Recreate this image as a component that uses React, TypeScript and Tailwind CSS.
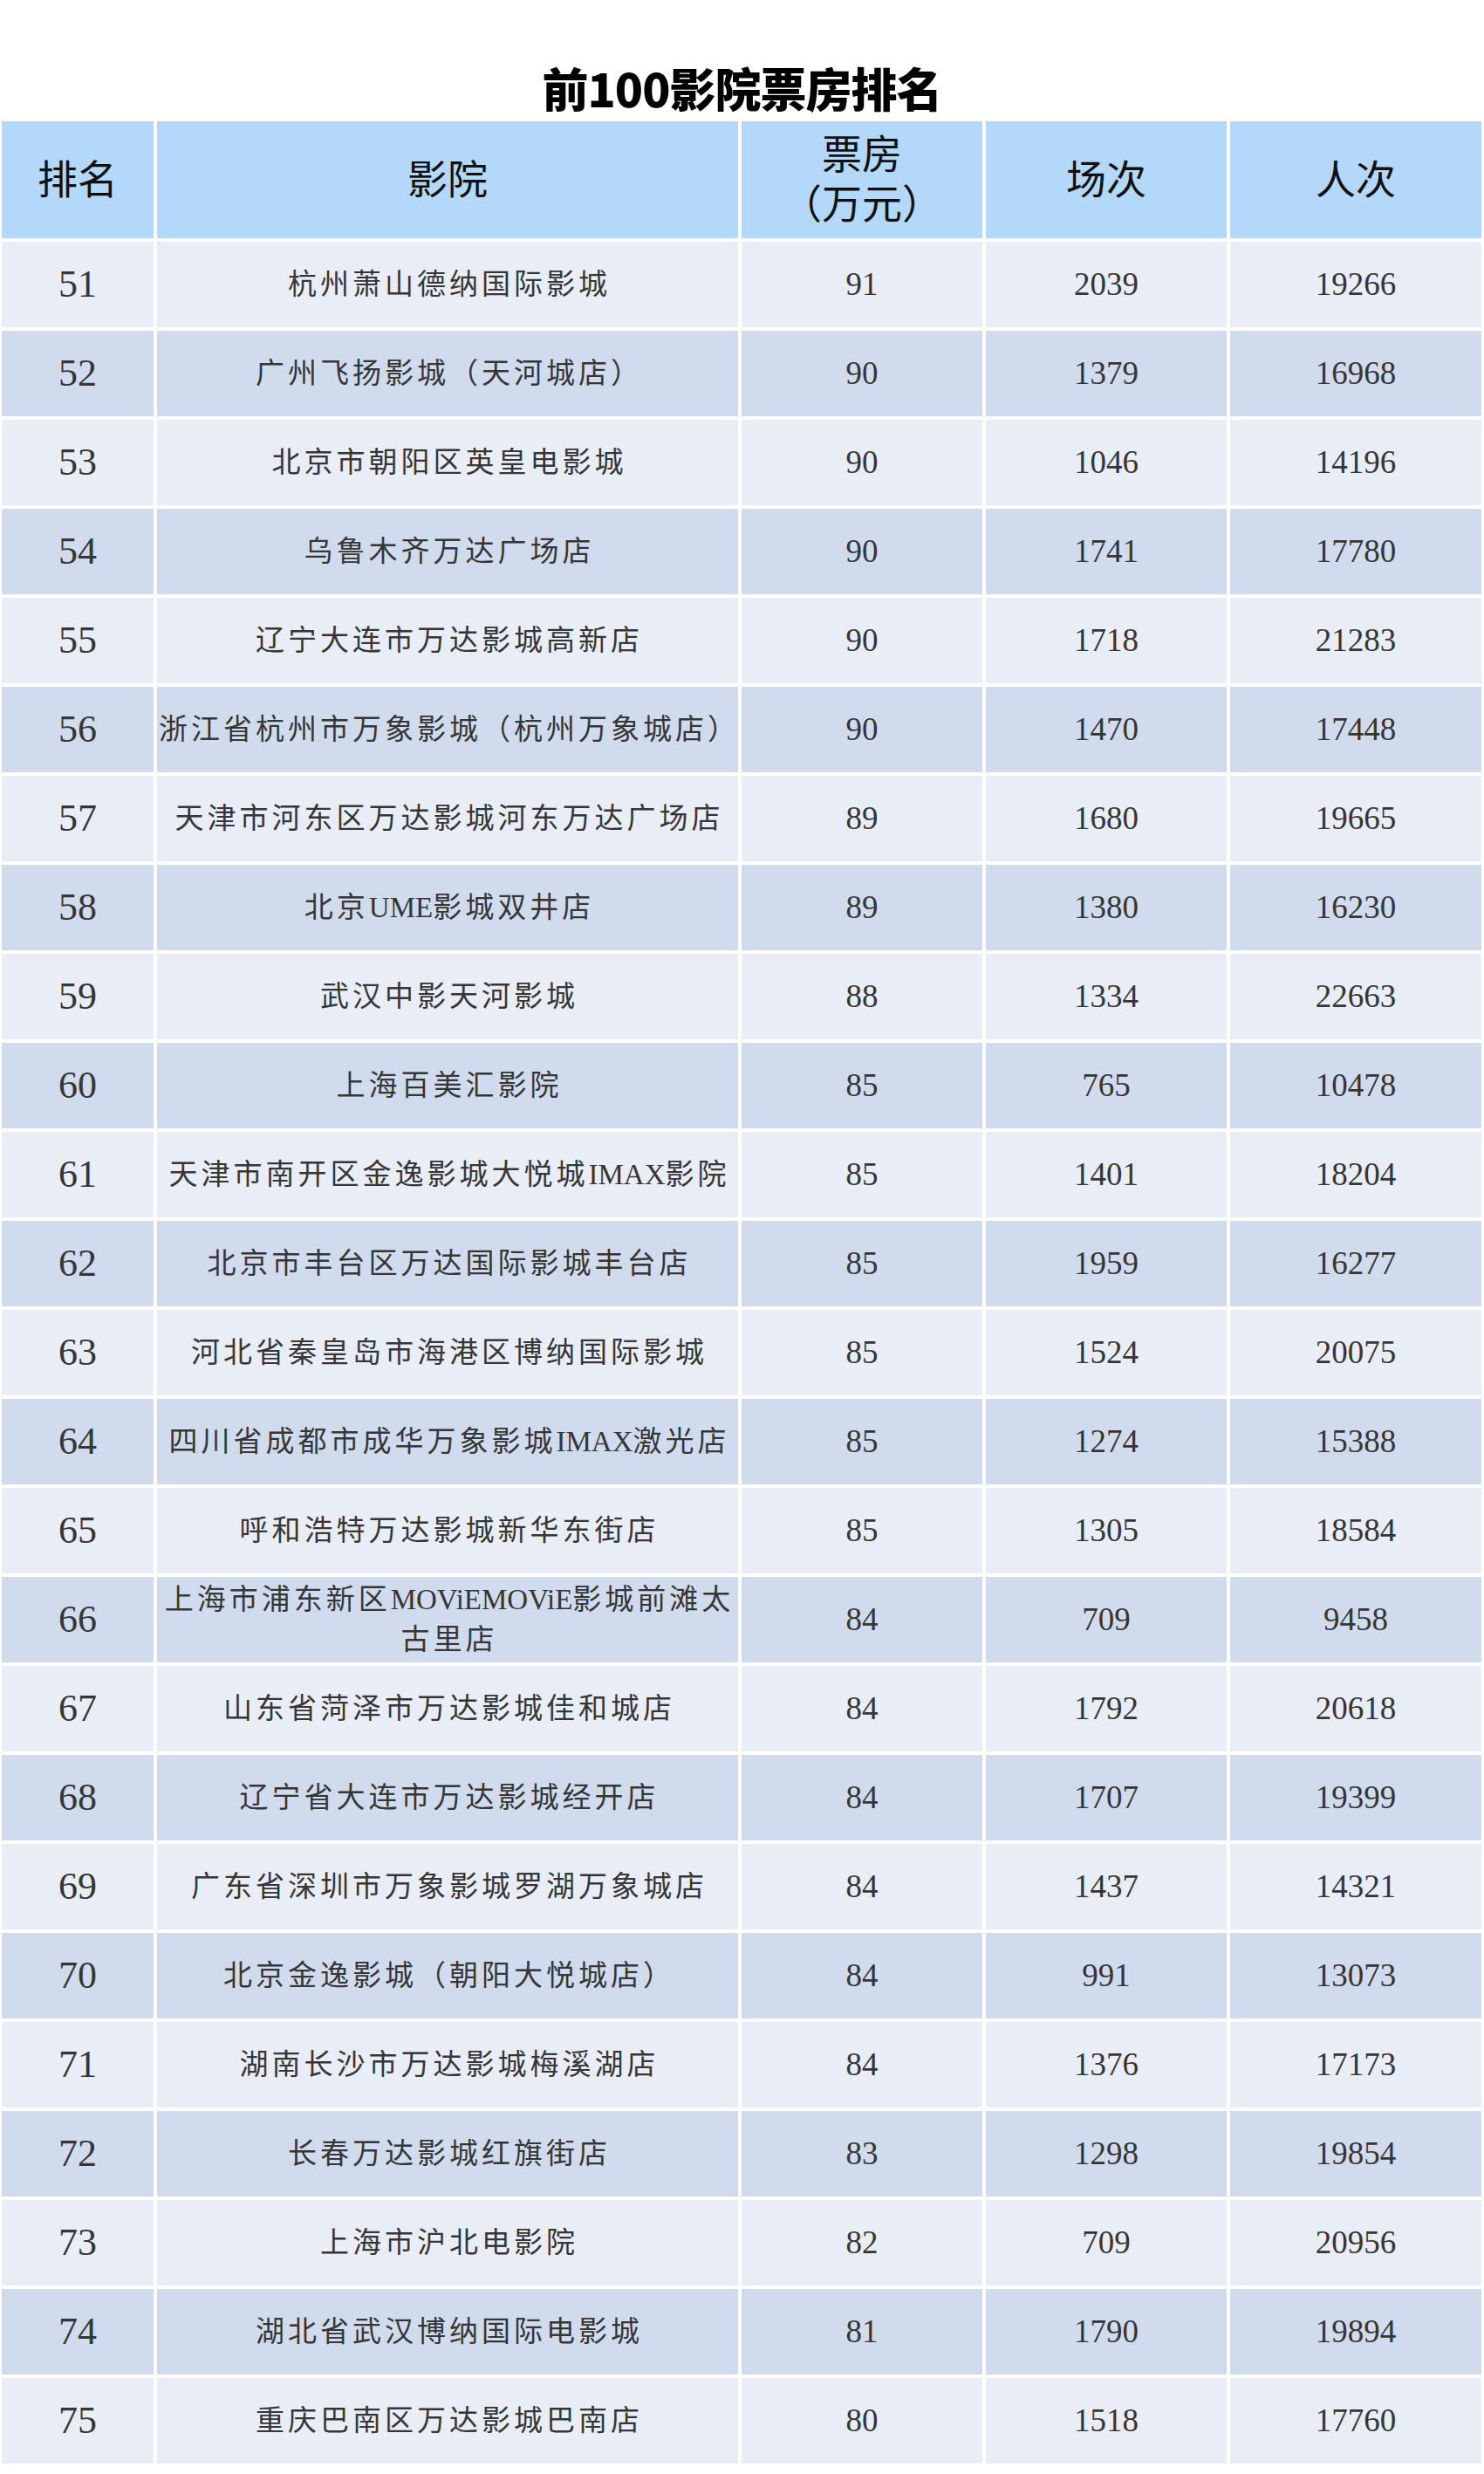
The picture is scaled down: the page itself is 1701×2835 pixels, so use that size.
type Row = [number, string, number, number, number];

const rows: Row[] = [
  [51, "杭州萧山德纳国际影城", 91, 2039, 19266],
  [52, "广州飞扬影城（天河城店）", 90, 1379, 16968],
  [53, "北京市朝阳区英皇电影城", 90, 1046, 14196],
  [54, "乌鲁木齐万达广场店", 90, 1741, 17780],
  [55, "辽宁大连市万达影城高新店", 90, 1718, 21283],
  [56, "浙江省杭州市万象影城（杭州万象城店）", 90, 1470, 17448],
  [57, "天津市河东区万达影城河东万达广场店", 89, 1680, 19665],
  [58, "北京UME影城双井店", 89, 1380, 16230],
  [59, "武汉中影天河影城", 88, 1334, 22663],
  [60, "上海百美汇影院", 85, 765, 10478],
  [61, "天津市南开区金逸影城大悦城IMAX影院", 85, 1401, 18204],
  [62, "北京市丰台区万达国际影城丰台店", 85, 1959, 16277],
  [63, "河北省秦皇岛市海港区博纳国际影城", 85, 1524, 20075],
  [64, "四川省成都市成华万象影城IMAX激光店", 85, 1274, 15388],
  [65, "呼和浩特万达影城新华东街店", 85, 1305, 18584],
  [66, "上海市浦东新区MOViEMOViE影城前滩太|古里店", 84, 709, 9458],
  [67, "山东省菏泽市万达影城佳和城店", 84, 1792, 20618],
  [68, "辽宁省大连市万达影城经开店", 84, 1707, 19399],
  [69, "广东省深圳市万象影城罗湖万象城店", 84, 1437, 14321],
  [70, "北京金逸影城（朝阳大悦城店）", 84, 991, 13073],
  [71, "湖南长沙市万达影城梅溪湖店", 84, 1376, 17173],
  [72, "长春万达影城红旗街店", 83, 1298, 19854],
  [73, "上海市沪北电影院", 82, 709, 20956],
  [74, "湖北省武汉博纳国际电影城", 81, 1790, 19894],
  [75, "重庆巴南区万达影城巴南店", 80, 1518, 17760],
];

const serif = "font-['Liberation_Serif','Noto_Sans_CJK_SC',serif]";

// latin runs inside names get no extra tracking so they stay narrow
function Name({ text }: { text: string }) {
  const lines = text.split("|");
  return (
    <div className="flex flex-col items-center leading-[46px]">
      {lines.map((line, i) => (
        <span key={i} className="whitespace-nowrap">
          {line.split(/([A-Za-z]+)/).map((part, j) =>
            /^[A-Za-z]+$/.test(part) ? (
              <span key={j} className="tracking-[0px]">
                {part}
              </span>
            ) : (
              <span key={j}>{part}</span>
            )
          )}
        </span>
      ))}
    </div>
  );
}

export default function App() {
  return (
    <div className={`w-[1701px] bg-white pb-[11px] ${serif}`}>
      <div className="h-[139px] flex items-center justify-center pt-[62px]">
        <h1 className="font-['Noto_Sans_CJK_SC',sans-serif] font-black text-[53px] leading-none text-black tracking-[-1px]">
          前100影院票房排名
        </h1>
      </div>

      <div className="grid grid-cols-[174px_666px_276px_276px_288px] gap-[4px] px-[2px]">
        <div className="h-[134px] bg-[#b3d8f9] flex items-center justify-center text-[46px] text-[#111]">
          排名
        </div>
        <div className="h-[134px] bg-[#b3d8f9] flex items-center justify-center text-[46px] text-[#111]">
          影院
        </div>
        <div className="h-[134px] bg-[#b3d8f9] flex flex-col items-center justify-center text-[46px] leading-[57px] text-[#111]">
          <span>票房</span>
          <span>（万元）</span>
        </div>
        <div className="h-[134px] bg-[#b3d8f9] flex items-center justify-center text-[46px] text-[#111]">
          场次
        </div>
        <div className="h-[134px] bg-[#b3d8f9] flex items-center justify-center text-[46px] text-[#111]">
          人次
        </div>

        {rows.map(([rank, name, box, shows, people], i) => {
          const bg = i % 2 === 0 ? "bg-[#e8edf6]" : "bg-[#d0dcee]";
          return (
            <div key={rank} className="contents text-[#363636]">
              <div className={`h-[98px] ${bg} flex items-center justify-center text-[44px]`}>{rank}</div>
              <div className={`h-[98px] ${bg} flex items-center justify-center text-[33px] tracking-[4px] pl-[4px]`}>
                <Name text={name} />
              </div>
              <div className={`h-[98px] ${bg} flex items-center justify-center text-[37px]`}>{box}</div>
              <div className={`h-[98px] ${bg} flex items-center justify-center text-[37px]`}>{shows}</div>
              <div className={`h-[98px] ${bg} flex items-center justify-center text-[37px]`}>{people}</div>
            </div>
          );
        })}
      </div>
    </div>
  );
}
